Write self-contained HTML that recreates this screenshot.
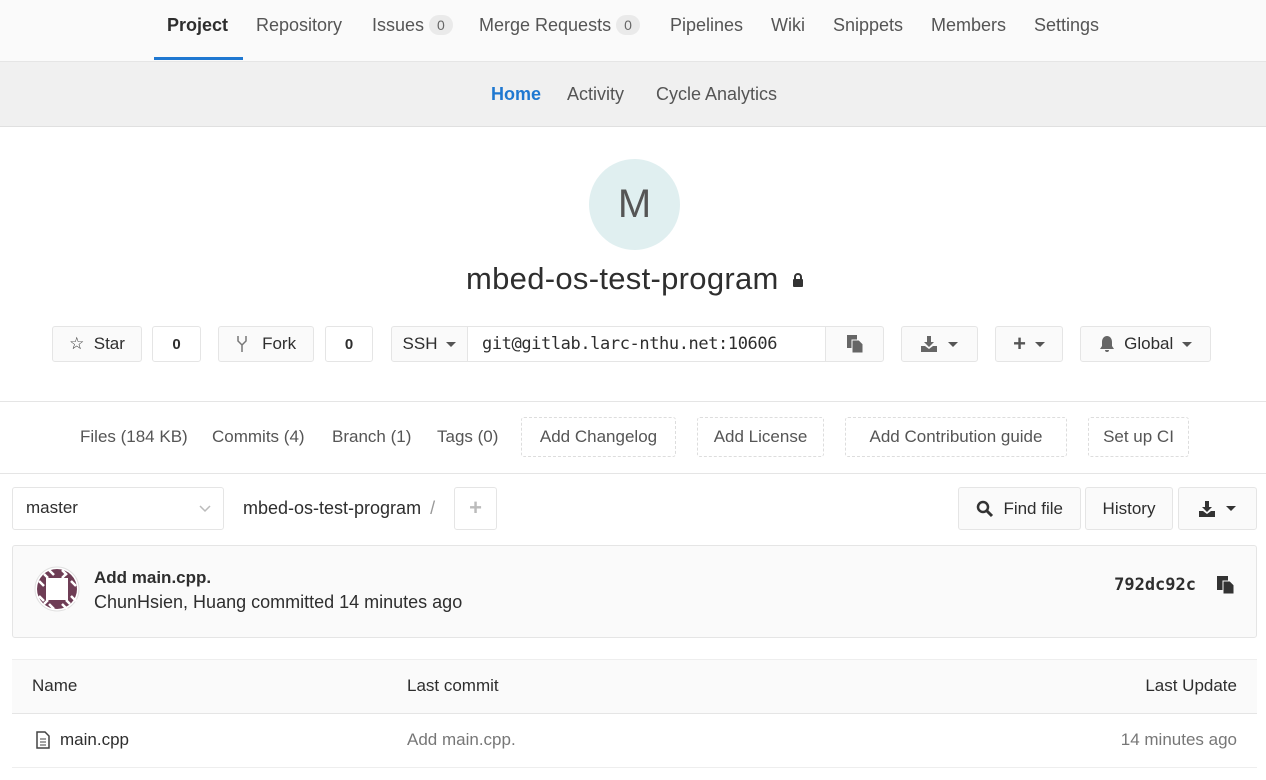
<!DOCTYPE html>
<html><head><meta charset="utf-8"><style>
*{box-sizing:border-box;margin:0;padding:0}
body{width:1266px;height:780px;overflow:hidden;background:#fff;font-family:"Liberation Sans","DejaVu Sans",sans-serif;color:#2e2e2e;font-size:17px;position:relative}
.a{position:absolute;white-space:nowrap}
.r{position:absolute;white-space:nowrap;text-align:right}
.nav1{position:absolute;left:0;top:0;width:1266px;height:62px;background:#fafafa;border-bottom:1px solid #e5e5e5}
.nav2{position:absolute;left:0;top:62px;width:1266px;height:65px;background:#f0f0f0;border-bottom:1px solid #e0e0e0}
.g{color:#555}
.badge{display:inline-block;background:#eaeaea;color:#666;border-radius:11px;font-size:14px;padding:2px 8px;margin-left:5px;vertical-align:1px}
.btn{position:absolute;border:1px solid #e5e5e5;border-radius:3px;background:#fafafa;height:36px;top:326px;display:flex;align-items:center;justify-content:center}
.cnt{position:absolute;border:1px solid #e5e5e5;border-radius:3px;background:#fff;height:36px;top:326px;font-weight:bold;font-size:15px;display:flex;align-items:center;justify-content:center}
.dash{position:absolute;top:417px;height:40px;border:1px dashed #ddd;border-radius:3px;display:flex;align-items:center;justify-content:center;color:#555}
.caret{display:inline-block;width:0;height:0;border-left:5px solid transparent;border-right:5px solid transparent;border-top:5px solid #555;margin-left:9px}
</style></head><body>
<div class="nav1"></div>
<div class="a" style="left:167px;top:15px;font-weight:bold;color:#2e2e2e;font-size:18px">Project</div>
<div style="position:absolute;left:154px;top:57px;width:89px;height:3px;background:#1f78d1"></div>
<div class="a g" style="left:256px;top:15px;font-size:18px">Repository</div>
<div class="a g" style="left:372px;top:15px;font-size:18px">Issues<span class="badge">0</span></div>
<div class="a g" style="left:479px;top:15px;font-size:18px">Merge Requests<span class="badge">0</span></div>
<div class="a g" style="left:670px;top:15px;font-size:18px">Pipelines</div>
<div class="a g" style="left:771px;top:15px;font-size:18px">Wiki</div>
<div class="a g" style="left:833px;top:15px;font-size:18px">Snippets</div>
<div class="a g" style="left:931px;top:15px;font-size:18px">Members</div>
<div class="a g" style="left:1034px;top:15px;font-size:18px">Settings</div>
<div class="nav2"></div>
<div class="a" style="left:491px;top:84px;font-weight:bold;color:#1f78d1;font-size:18px">Home</div>
<div class="a g" style="left:567px;top:84px;font-size:18px">Activity</div>
<div class="a g" style="left:656px;top:84px;font-size:18px">Cycle Analytics</div>
<div style="position:absolute;left:589px;top:159px;width:91px;height:91px;border-radius:50%;background:#e0eff0;display:flex;align-items:center;justify-content:center;font-size:40px;color:#555">M</div>
<div class="a" style="left:466px;top:261px;font-size:31px;color:#2e2e2e;letter-spacing:0.3px">mbed-os-test-program</div>
<svg class="a" style="left:792px;top:273px" width="12" height="14"><path d="M3 6V4a3 3 0 0 1 6 0v2" fill="none" stroke="#333" stroke-width="2"/><rect x="1" y="6" width="10" height="8" rx="1" fill="#333"/></svg>
<div class="btn" style="left:52px;width:90px">☆&nbsp; Star</div>
<div class="cnt" style="left:152px;width:49px">0</div>
<div class="btn" style="left:218px;width:96px"><svg width="12" height="18"><path d="M2 1v5l4 4 4-4V1M6 10v7" fill="none" stroke="#777" stroke-width="1.5"/></svg>&nbsp;&nbsp; Fork</div>
<div class="cnt" style="left:325px;width:48px">0</div>
<div class="btn" style="left:391px;width:77px;border-radius:3px 0 0 3px">SSH<span class="caret"></span></div>
<div class="btn" style="left:467px;width:359px;background:#fff;border-radius:0;font-family:'DejaVu Sans Mono','Liberation Mono',monospace;font-size:17px;justify-content:flex-start;padding-left:14px;letter-spacing:-0.4px">git@gitlab.larc-nthu.net:10606</div>
<div class="btn" style="left:825px;width:59px;border-radius:0 3px 3px 0"><svg width="16" height="18"><rect x="0" y="0" width="10" height="13" fill="#666"/><path d="M5 5h7l4 4v9H5z" fill="#666" stroke="#fafafa" stroke-width="1"/></svg></div>
<div class="btn" style="left:901px;width:77px"><svg width="18" height="16"><path d="M6 0h4v6h3l-5 5-5-5h3z M0 10h4l4 3 4-3h4v6H0z" fill="#666"/></svg><span class="caret"></span></div>
<div class="btn" style="left:995px;width:68px"><b style="color:#555;font-size:22px">+</b><span class="caret"></span></div>
<div class="btn" style="left:1080px;width:131px"><svg width="16" height="18"><path d="M8 1c3 0 5 2.5 5 6v4l2 3H1l2-3V7c0-3.5 2-6 5-6z M6 15h4a2 2 0 0 1-4 0z" fill="#666"/></svg>&nbsp; Global<span class="caret"></span></div>
<div style="position:absolute;left:0;top:401px;width:1266px;height:1px;background:#e5e5e5"></div>
<div class="a g" style="left:80px;top:427px">Files (184 KB)</div>
<div class="a g" style="left:212px;top:427px">Commits (4)</div>
<div class="a g" style="left:332px;top:427px">Branch (1)</div>
<div class="a g" style="left:437px;top:427px">Tags (0)</div>
<div class="dash" style="left:521px;width:155px">Add Changelog</div>
<div class="dash" style="left:697px;width:127px">Add License</div>
<div class="dash" style="left:845px;width:222px">Add Contribution guide</div>
<div class="dash" style="left:1088px;width:101px">Set up CI</div>
<div style="position:absolute;left:0;top:473px;width:1266px;height:1px;background:#e5e5e5"></div>
<div style="position:absolute;left:12px;top:487px;width:212px;height:43px;border:1px solid #e5e5e5;border-radius:3px;padding:10px 13px">master<svg style="position:absolute;right:12px;top:17px" width="12" height="8"><path d="M1 1l5 5 5-5" fill="none" stroke="#bbb" stroke-width="1.5"/></svg></div>
<div class="a" style="left:243px;top:498px;font-size:18px">mbed-os-test-program <span style="color:#999;margin-left:4px">/</span></div>
<div style="position:absolute;left:454px;top:487px;width:43px;height:43px;border:1px solid #e5e5e5;border-radius:3px;text-align:center;line-height:40px;color:#bbb;font-size:22px;font-weight:bold">+</div>
<div class="btn" style="left:958px;top:487px;height:43px;width:123px"><svg width="18" height="18"><circle cx="7" cy="7" r="5" fill="none" stroke="#333" stroke-width="2.5"/><path d="M11 11l5 5" stroke="#333" stroke-width="3"/></svg>&nbsp; Find file</div>
<div class="btn" style="left:1085px;top:487px;height:43px;width:88px">History</div>
<div class="btn" style="left:1178px;top:487px;height:43px;width:79px"><svg width="18" height="16"><path d="M6 0h4v6h3l-5 5-5-5h3z M0 10h4l4 3 4-3h4v6H0z" fill="#333"/></svg><span class="caret" style="border-top-color:#333"></span></div>
<div style="position:absolute;left:12px;top:545px;width:1245px;height:93px;background:#fafafa;border:1px solid #e5e5e5;border-radius:3px"></div>
<svg class="a" style="left:34px;top:566px" width="46" height="46"><circle cx="23" cy="23" r="22" fill="#fff" stroke="#e0e0e0"/><circle cx="23" cy="23" r="20" fill="#6e3d55"/><rect x="12" y="12" width="22" height="22" fill="#fff"/><path d="M5 15l5 5M15 4l5 5M28 4l5 5M37 15l5 5M5 30l5 5M15 38l5 5M28 38l5 5M37 30l5 5M10 8l4 4M32 8l-4 4M10 38l4-4M36 38l-4-4" stroke="#fff" stroke-width="2.5"/></svg>
<div class="a" style="left:94px;top:568px;font-weight:bold;font-size:17px">Add main.cpp.</div>
<div class="a" style="left:94px;top:592px;font-size:18px">ChunHsien, Huang committed 14 minutes ago</div>
<div class="r" style="right:70px;top:575px;font-weight:bold;font-family:'DejaVu Sans Mono','Liberation Mono',monospace;font-size:17px">792dc92c</div>
<svg class="a" style="left:1217px;top:576px" width="18" height="18"><rect x="0" y="0" width="11" height="14" fill="#333"/><path d="M6 5h7l4 4v9H6z" fill="#333" stroke="#fafafa"/></svg>
<div style="position:absolute;left:12px;top:659px;width:1245px;height:55px;background:#fafafa;border-top:1px solid #eee;border-bottom:1px solid #e5e5e5"></div>
<div class="a" style="left:32px;top:676px">Name</div>
<div class="a" style="left:407px;top:676px">Last commit</div>
<div class="r" style="right:29px;top:676px">Last Update</div>
<svg class="a" style="left:36px;top:731px" width="14" height="18"><path d="M1 1h8l4 4v12H1z" fill="none" stroke="#444" stroke-width="1.5"/><path d="M4 8h6M4 11h6M4 14h6" stroke="#444"/></svg>
<div class="a" style="left:60px;top:730px">main.cpp</div>
<div class="a" style="left:407px;top:730px;color:#777">Add main.cpp.</div>
<div class="r" style="right:29px;top:730px;color:#777">14 minutes ago</div>
<div style="position:absolute;left:12px;top:767px;width:1245px;height:1px;background:#eee"></div>
</body></html>
